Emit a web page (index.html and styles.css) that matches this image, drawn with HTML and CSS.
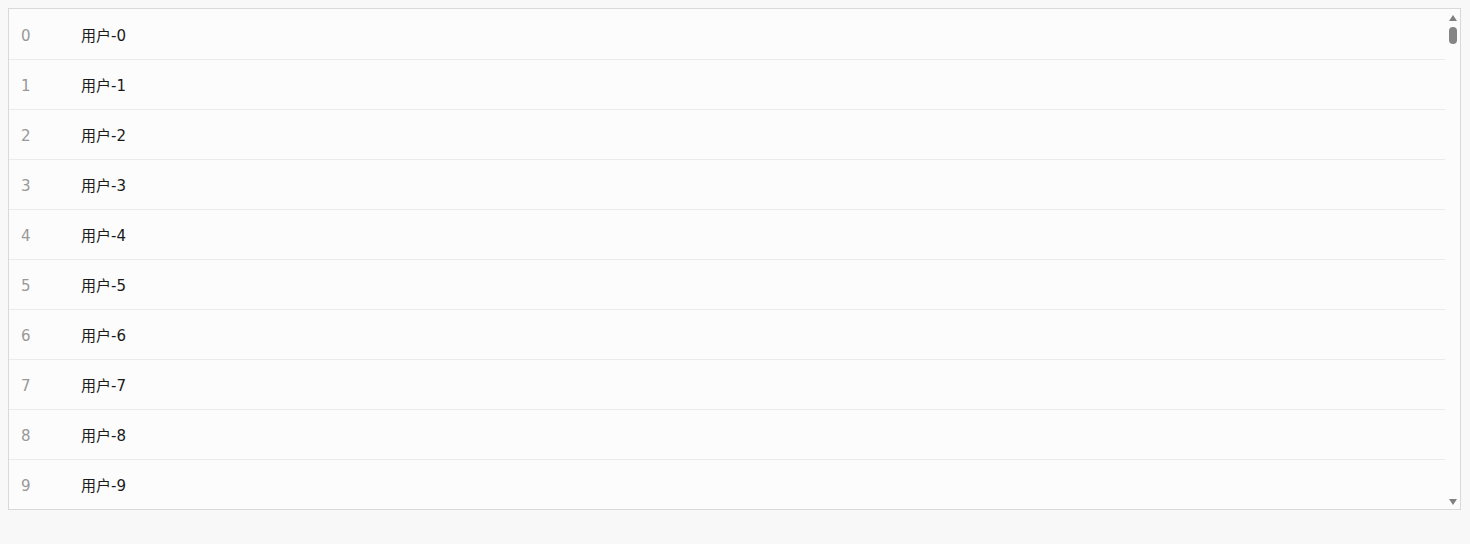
FILE: index.html
```html
<!DOCTYPE html>
<html lang="zh-CN">
<head>
<meta charset="utf-8">
<title>List</title>
<link rel="stylesheet" href="styles.css">
</head>
<body>
<div class="list">
  <div class="viewport">
    <div class="row"><span class="idx">0</span><span class="name">用户-0</span></div>
    <div class="row"><span class="idx">1</span><span class="name">用户-1</span></div>
    <div class="row"><span class="idx">2</span><span class="name">用户-2</span></div>
    <div class="row"><span class="idx">3</span><span class="name">用户-3</span></div>
    <div class="row"><span class="idx">4</span><span class="name">用户-4</span></div>
    <div class="row"><span class="idx">5</span><span class="name">用户-5</span></div>
    <div class="row"><span class="idx">6</span><span class="name">用户-6</span></div>
    <div class="row"><span class="idx">7</span><span class="name">用户-7</span></div>
    <div class="row"><span class="idx">8</span><span class="name">用户-8</span></div>
    <div class="row"><span class="idx">9</span><span class="name">用户-9</span></div>
  </div>
  <div class="scrollbar">
    <div class="sb-btn sb-btn-up"><span class="arrow-up"></span></div>
    <div class="sb-track"><div class="sb-thumb"></div></div>
    <div class="sb-btn"><span class="arrow-down"></span></div>
  </div>
</div>
</body>
</html>
```

FILE: styles.css
```css
html, body {
  margin: 0;
  padding: 0;
}
body {
  background: #f8f8f8;
  padding: 8px;
  font-family: "DejaVu Sans", "Noto Sans CJK SC", sans-serif;
  font-size: 15px;
  color: #1a1a1a;
}
.list {
  display: flex;
  height: 500px;
  margin-right: 1px;
  border: 1px solid #d9d9d9;
  background: #fcfcfc;
  overflow: hidden;
}
.viewport {
  flex: 1;
  display: flex;
  flex-direction: column;
  padding-top: 1px;
  overflow: hidden;
}
.row {
  flex: none;
  display: block;
  height: 50px;
  padding: 4px 12px 0;
  line-height: 45px;
  box-sizing: border-box;
  border-bottom: 1px solid #ebebeb;
  white-space: nowrap;
}
.idx {
  display: inline-block;
  width: 60px;
  color: #999;
}
.name {
  color: #1a1a1a;
}
.scrollbar {
  width: 15px;
  display: flex;
  flex-direction: column;
  background: #fcfcfc;
}
.sb-btn {
  height: 15px;
  box-sizing: border-box;
  display: flex;
  align-items: center;
  justify-content: center;
}
.sb-btn-up {
  padding-top: 2px;
}
.arrow-up {
  width: 0;
  height: 0;
  border-left: 4.5px solid transparent;
  border-right: 4.5px solid transparent;
  border-bottom: 6px solid #808080;
}
.arrow-down {
  width: 0;
  height: 0;
  border-left: 4.5px solid transparent;
  border-right: 4.5px solid transparent;
  border-top: 6px solid #808080;
}
.sb-track {
  flex: 1;
  display: flex;
  flex-direction: column;
  align-items: center;
  padding-top: 3px;
}
.sb-thumb {
  width: 8px;
  height: 17px;
  border-radius: 4px;
  background: #858585;
}
```
